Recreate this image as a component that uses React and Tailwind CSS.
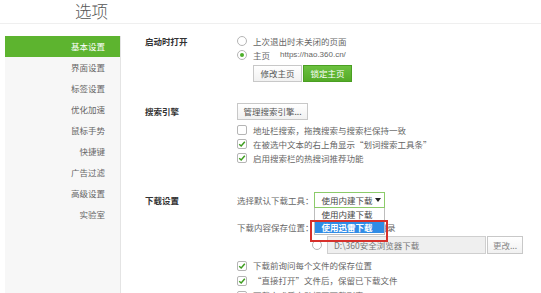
import React from 'react'

const navItems = ['基本设置', '界面设置', '标签设置', '优化加速', '鼠标手势', '快捷键', '广告过滤', '高级设置', '实验室']

function Radio({ checked }) {
    return (
        <span className="w-[10px] h-[10px] shrink-0 rounded-full border border-[#b5b5b5] bg-white flex items-center justify-center">
            {checked && <span className="w-[4px] h-[4px] rounded-full bg-[#4caf2a]" />}
        </span>
    )
}

function Check({ checked }) {
    return (
        <span className="w-[10px] h-[10px] shrink-0 rounded-[2px] border border-[#b5b5b5] bg-white flex items-center justify-center">
            {checked && (
                <svg width="8" height="8" viewBox="0 0 8 8">
                    <path d="M1.2 4.2 L3.2 6 L6.8 1.8" fill="none" stroke="#3e9d1f" strokeWidth="1.5" />
                </svg>
            )}
        </span>
    )
}

function CheckRow({ checked, children, h = 'h-[14px]' }) {
    return (
        <div className={`flex items-center gap-[6px] ${h}`}>
            <Check checked={checked} />
            <span className="whitespace-nowrap">{children}</span>
        </div>
    )
}

export default function App() {
    return (
        <div className="w-[541px] h-[293px] bg-white overflow-hidden flex flex-col text-[8.5px] text-[#666] [font-family:'Noto_Sans_CJK_SC','Noto_Sans',sans-serif]">
            {/* header */}
            <div className="h-[24px] shrink-0 border-b border-[#efefef] pl-[75px] text-[16.5px] leading-[23px] text-[#555] font-light">
                选项
            </div>

            <div className="flex flex-1 min-h-0">
                {/* sidebar */}
                <div className="ml-[5px] mt-[12px] w-[116px] shrink-0 bg-[#f7f7f7] border-r border-[#e4e4e4]">
                    {navItems.map((item, i) => (
                        <div
                            key={item}
                            className={
                                i === 0
                                    ? 'h-[21px] leading-[21px] text-right pr-[15px] bg-[#5db42f] text-white'
                                    : 'h-[21px] leading-[21px] text-right pr-[15px] text-[#666]'
                            }
                        >
                            {item}
                        </div>
                    ))}
                </div>

                {/* content */}
                <div className="flex-1 pl-[24px] pt-[10px]">
                    {/* 启动时打开 */}
                    <div className="flex">
                        <div className="w-[92px] h-[14px] leading-[14px] font-bold text-[#333]">启动时打开</div>
                        <div>
                            <div className="flex items-center gap-[6px] h-[14px]">
                                <Radio />
                                <span>上次退出时未关闭的页面</span>
                            </div>
                            <div className="flex items-center gap-[6px] h-[14px]">
                                <Radio checked />
                                <span>主页</span>
                                <span className="ml-[4px] [font-family:'Liberation_Sans',sans-serif] text-[8px]">https://hao.360.cn/</span>
                            </div>
                            <div className="flex gap-[1px] pl-[16px] mt-[3px]">
                                <button className="w-[49px] h-[17px] border border-[#c8c8c8] bg-gradient-to-b from-white to-[#f1f1f1] text-[#555]">修改主页</button>
                                <button className="w-[49px] h-[17px] border border-[#4a9f22] bg-gradient-to-b from-[#6cc13f] to-[#54ab27] text-white">锁定主页</button>
                            </div>
                        </div>
                    </div>

                    {/* 搜索引擎 */}
                    <div className="flex mt-[21px]">
                        <div className="w-[92px] h-[17px] leading-[17px] font-bold text-[#333]">搜索引擎</div>
                        <div>
                            <button className="w-[71px] h-[17px] border border-[#c8c8c8] bg-gradient-to-b from-white to-[#f1f1f1] text-[#555]">管理搜索引擎...</button>
                            <div className="mt-[3px]">
                                <CheckRow>地址栏搜索，拖拽搜索与搜索栏保持一致</CheckRow>
                                <CheckRow checked>在被选中文本的右上角显示“划词搜索工具条”</CheckRow>
                                <CheckRow checked>启用搜索栏的热搜词推荐功能</CheckRow>
                            </div>
                        </div>
                    </div>

                    {/* 下载设置 */}
                    <div className="flex mt-[27px]">
                        <div className="w-[92px] h-[16px] leading-[17px] font-bold text-[#333]">下载设置</div>
                        <div>
                            <div className="flex items-center h-[16px]">
                                <span className="whitespace-nowrap">选择默认下载工具：</span>
                                <div className="relative z-10">
                                    <div className="w-[71px] h-[16px] border border-[#8ccb6a] bg-white flex items-center justify-between pl-[7px] pr-[3px] text-[#444] whitespace-nowrap">
                                        <span>使用内建下载</span>
                                        <svg width="6" height="4" viewBox="0 0 6 4">
                                            <path d="M0 0 L6 0 L3 4 Z" fill="#222" />
                                        </svg>
                                    </div>
                                    <div className="absolute top-full left-0 w-[71px] bg-white border border-t-0 border-[#bdbdbd] pb-[1px] whitespace-nowrap">
                                        <div className="h-[13px] leading-[13px] pl-[7px] text-[#444]">使用内建下载</div>
                                        <div className="h-[12px] leading-[12px] pl-[7px] bg-[#2f8ce6] text-white font-bold">使用迅雷下载</div>
                                    </div>
                                    <div className="absolute left-[-4px] top-[28px] w-[78px] h-[22px] border-2 border-[#d7302b]" />
                                </div>
                            </div>
                            <div className="flex items-center h-[14px] mt-[12px]">
                                <span className="whitespace-nowrap">下载内容保存位置：</span>
                                <Radio />
                                <span className="ml-[4px] whitespace-nowrap">使用默认下载目录</span>
                            </div>
                            <div className="flex items-center mt-[2px] pl-[75px]">
                                <Radio checked={false} />
                                <div className="ml-[5px] w-[159px] h-[18px] border border-[#cfcfcf] bg-[#efefef] leading-[16px] pl-[6px] text-[#777] whitespace-nowrap">D:\360安全浏览器下载</div>
                                <button className="ml-[1px] w-[36px] h-[18px] border border-[#c8c8c8] bg-gradient-to-b from-white to-[#f1f1f1] text-[#888]">更改...</button>
                            </div>
                            <div className="mt-[4px]">
                                <CheckRow checked h="h-[15px]">下载前询问每个文件的保存位置</CheckRow>
                                <CheckRow checked h="h-[15px]">“直接打开”文件后，保留已下载文件</CheckRow>
                                <CheckRow h="h-[15px]">下载完成后自动打开下载列表</CheckRow>
                            </div>
                        </div>
                    </div>
                </div>
            </div>
        </div>
    )
}
